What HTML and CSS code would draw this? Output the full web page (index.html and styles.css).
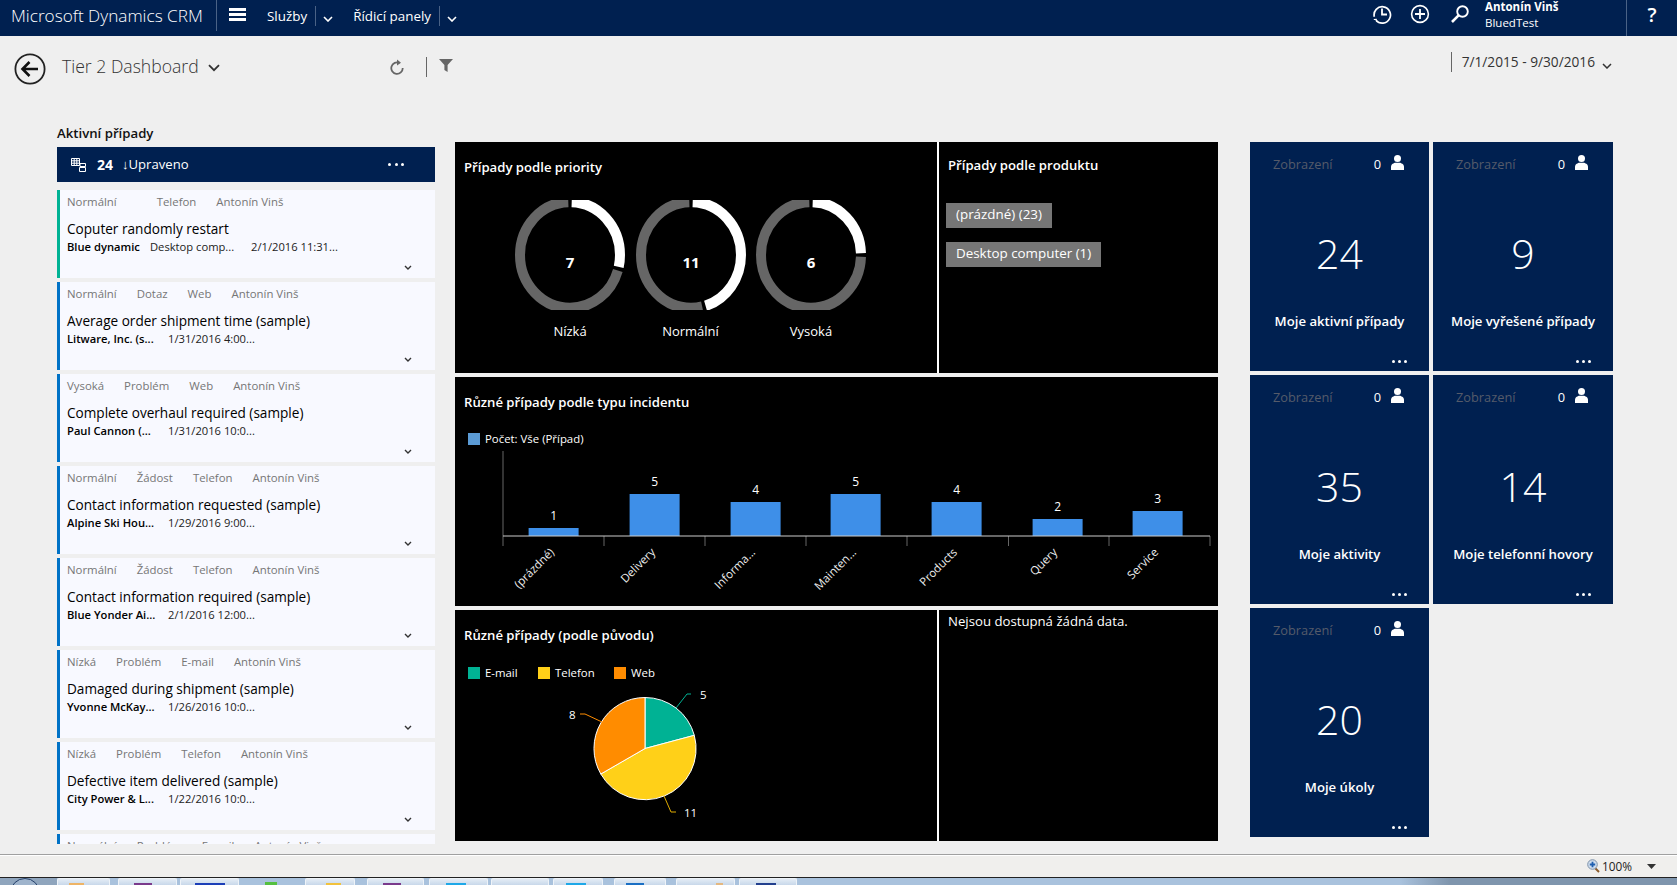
FILE: index.html
```html
<!DOCTYPE html>
<html lang="cs">
<head>
<meta charset="utf-8">
<title>Tier 2 Dashboard</title>
<link rel="stylesheet" href="styles.css">
</head>
<body>
<header class="topbar">
  <div class="brand">Microsoft Dynamics CRM</div>
  <svg class="burger" width="17" height="13" viewBox="0 0 17 13"><path d="M0 1.5h17M0 6.5h17M0 11.5h17" stroke="#fff" stroke-width="3"/></svg>
  <div class="nav nav-first">Služby</div>
  <svg class="nav-chev" width="10" height="6" viewBox="0 0 10 6"><path d="M1 1l4 4 4-4" fill="none" stroke="#fff" stroke-width="1.6"/></svg>
  <div class="nav nav-second">Řídicí panely</div>
  <svg class="nav-chev" width="10" height="6" viewBox="0 0 10 6"><path d="M1 1l4 4 4-4" fill="none" stroke="#fff" stroke-width="1.6"/></svg>
  <svg class="tool tool-clock" width="20" height="20" viewBox="0 0 20 20"><path d="M4 16.2A8.2 8.2 0 1 0 2.3 12.8" fill="none" stroke="#fff" stroke-width="1.7"/><path d="M1.8 15.5l2.4-.2.5 2.4" fill="none" stroke="#fff" stroke-width="1.2"/><path d="M10 4.5V10.500H15" fill="none" stroke="#fff" stroke-width="1.8"/></svg>
  <svg class="tool tool-plus" width="20" height="20" viewBox="0 0 20 20"><circle cx="10" cy="10" r="8.4" fill="none" stroke="#fff" stroke-width="1.6"/><path d="M10 5v10M5 10h10" stroke="#fff" stroke-width="1.8"/></svg>
  <svg class="tool tool-search" width="20" height="20" viewBox="0 0 20 20"><circle cx="12.5" cy="7.5" r="5.3" fill="none" stroke="#fff" stroke-width="1.9"/><path d="M8.6 11.4L2 18" stroke="#fff" stroke-width="2.6"/></svg>
  <div class="user"><b>Antonín Vinš</b><span>BluedTest</span></div>
  <div class="help">?</div>
</header>

<section class="toolbar">
  <svg class="back" width="32" height="32" viewBox="0 0 32 32"><circle cx="16" cy="16" r="14.6" fill="none" stroke="#222" stroke-width="1.8"/><path d="M15.5 9L8.5 16l7 7M9 16h15" fill="none" stroke="#111" stroke-width="2.6"/></svg>
  <h1 class="dash-title">Tier 2 Dashboard</h1>
  <svg class="dash-chev" width="12" height="8" viewBox="0 0 12 8"><path d="M1 1.2l5 5 5-5" fill="none" stroke="#333" stroke-width="1.8"/></svg>
  <svg class="refresh" width="14" height="16" viewBox="0 0 14 16"><path d="M9.5 4A5.7 5.7 0 1 0 12.7 9" fill="none" stroke="#666" stroke-width="1.8"/><path d="M7 0.5l4 3.2L7 6.5z" fill="#666"/></svg>
  <div class="vsep"></div>
  <svg class="funnel" width="14" height="13" viewBox="0 0 14 13"><path d="M0 0h14L8.6 6v7L5.4 11V6z" fill="#666"/></svg>
  <div class="date-range">7/1/2015 - 9/30/2016</div>
  <svg class="date-chev" width="10" height="6" viewBox="0 0 10 6"><path d="M1 1l4 4 4-4" fill="none" stroke="#333" stroke-width="1.5"/></svg>
</section>

<main class="content">
  <section class="cases">
    <h2 class="cases-title">Aktivní případy</h2>
    <div class="cases-bar">
      <svg class="grid-icon" width="15" height="14" viewBox="0 0 15 14"><path d="M.5.5h8v7h-8zM3.2.5v7M5.8.5v7M.5 2.8h8M.5 5.2h8M9 5.5h5.5v3H9zM8.5 9.5h6v4h-6z" fill="none" stroke="#fff" stroke-width="1"/></svg>
      <strong class="count">24</strong>
      <span class="sort">↓Upraveno</span>
      <span class="dots bar-dots"><i></i><i></i><i></i></span>
    </div>
    <div class="card-list">
      <article class="card card-green">
        <div class="meta"><span>Normální</span><span></span><span>Telefon</span><span>Antonín Vinš</span></div>
        <div class="card-title">Coputer randomly restart</div>
        <div class="sub sub-wide"><b>Blue dynamic</b><span>Desktop comp...</span><span>2/1/2016 11:31...</span></div>
        <svg class="card-chev" width="8" height="5" viewBox="0 0 8 5"><path d="M1 1l3 3 3-3" fill="none" stroke="#333" stroke-width="1.4"/></svg>
      </article>
      <article class="card">
        <div class="meta"><span>Normální</span><span>Dotaz</span><span>Web</span><span>Antonín Vinš</span></div>
        <div class="card-title">Average order shipment time (sample)</div>
        <div class="sub"><b>Litware, Inc. (s...</b><span>1/31/2016 4:00...</span></div>
        <svg class="card-chev" width="8" height="5" viewBox="0 0 8 5"><path d="M1 1l3 3 3-3" fill="none" stroke="#333" stroke-width="1.4"/></svg>
      </article>
      <article class="card">
        <div class="meta"><span>Vysoká</span><span>Problém</span><span>Web</span><span>Antonín Vinš</span></div>
        <div class="card-title">Complete overhaul required (sample)</div>
        <div class="sub"><b>Paul Cannon (...</b><span>1/31/2016 10:0...</span></div>
        <svg class="card-chev" width="8" height="5" viewBox="0 0 8 5"><path d="M1 1l3 3 3-3" fill="none" stroke="#333" stroke-width="1.4"/></svg>
      </article>
      <article class="card">
        <div class="meta"><span>Normální</span><span>Žádost</span><span>Telefon</span><span>Antonín Vinš</span></div>
        <div class="card-title">Contact information requested (sample)</div>
        <div class="sub"><b>Alpine Ski Hou...</b><span>1/29/2016 9:00...</span></div>
        <svg class="card-chev" width="8" height="5" viewBox="0 0 8 5"><path d="M1 1l3 3 3-3" fill="none" stroke="#333" stroke-width="1.4"/></svg>
      </article>
      <article class="card">
        <div class="meta"><span>Normální</span><span>Žádost</span><span>Telefon</span><span>Antonín Vinš</span></div>
        <div class="card-title">Contact information required (sample)</div>
        <div class="sub"><b>Blue Yonder Ai...</b><span>2/1/2016 12:00...</span></div>
        <svg class="card-chev" width="8" height="5" viewBox="0 0 8 5"><path d="M1 1l3 3 3-3" fill="none" stroke="#333" stroke-width="1.4"/></svg>
      </article>
      <article class="card">
        <div class="meta"><span>Nízká</span><span>Problém</span><span>E-mail</span><span>Antonín Vinš</span></div>
        <div class="card-title">Damaged during shipment (sample)</div>
        <div class="sub"><b>Yvonne McKay...</b><span>1/26/2016 10:0...</span></div>
        <svg class="card-chev" width="8" height="5" viewBox="0 0 8 5"><path d="M1 1l3 3 3-3" fill="none" stroke="#333" stroke-width="1.4"/></svg>
      </article>
      <article class="card">
        <div class="meta"><span>Nízká</span><span>Problém</span><span>Telefon</span><span>Antonín Vinš</span></div>
        <div class="card-title">Defective item delivered (sample)</div>
        <div class="sub"><b>City Power &amp; L...</b><span>1/22/2016 10:0...</span></div>
        <svg class="card-chev" width="8" height="5" viewBox="0 0 8 5"><path d="M1 1l3 3 3-3" fill="none" stroke="#333" stroke-width="1.4"/></svg>
      </article>
      <article class="card">
        <div class="meta"><span>Normální</span><span>Problém</span><span>E-mail</span><span>Antonín Vinš</span></div>
      </article>
    </div>
  </section>

  <section class="charts">
    <div class="split split-top">
      <div class="panel">
        <h3 class="panel-title">Případy podle priority</h3>
        <div class="donuts">
          <figure class="donut">
            <svg width="110" height="110" viewBox="0 0 110 110"><g transform="translate(55 55) scale(1 1.06) rotate(-90) translate(-55 -55)"><circle class="ring-grey" cx="55" cy="55" r="50" pathLength="360" stroke-dasharray="251 360" stroke-dashoffset="-107"/><circle class="ring-white" cx="55" cy="55" r="50" pathLength="360" stroke-dasharray="101 360" stroke-dashoffset="-2"/></g><text class="ring-num" x="55" y="68">7</text></svg>
            <figcaption>Nízká</figcaption>
          </figure>
          <figure class="donut">
            <svg width="110" height="110" viewBox="0 0 110 110"><g transform="translate(55 55) scale(1 1.06) rotate(-90) translate(-55 -55)"><circle class="ring-grey" cx="55" cy="55" r="50" pathLength="360" stroke-dasharray="191 360" stroke-dashoffset="-167"/><circle class="ring-white" cx="55" cy="55" r="50" pathLength="360" stroke-dasharray="161 360" stroke-dashoffset="-2"/></g><text class="ring-num" x="55" y="68">11</text></svg>
            <figcaption>Normální</figcaption>
          </figure>
          <figure class="donut">
            <svg width="110" height="110" viewBox="0 0 110 110"><g transform="translate(55 55) scale(1 1.06) rotate(-90) translate(-55 -55)"><circle class="ring-grey" cx="55" cy="55" r="50" pathLength="360" stroke-dasharray="266 360" stroke-dashoffset="-92"/><circle class="ring-white" cx="55" cy="55" r="50" pathLength="360" stroke-dasharray="86 360" stroke-dashoffset="-2"/></g><text class="ring-num" x="55" y="68">6</text></svg>
            <figcaption>Vysoká</figcaption>
          </figure>
        </div>
      </div>
      <div class="panel panel-side">
        <h3 class="panel-title">Případy podle produktu</h3>
        <div class="tags">
          <div class="tag">(prázdné) (23)</div>
          <div class="tag">Desktop computer (1)</div>
        </div>
      </div>
    </div>

    <div class="panel panel-wide">
      <h3 class="panel-title">Různé případy podle typu incidentu</h3>
      <div class="legend legend-bar"><span class="swatch sw-blue"></span><span>Počet: Vše (Případ)</span></div>
      <svg class="bar-chart" width="763" height="161" viewBox="0 0 763 161">
        <g class="bars">
          <rect x="73.6" y="83" width="50" height="8"/><rect x="174.6" y="49" width="50" height="42"/><rect x="275.6" y="57" width="50" height="34"/><rect x="375.6" y="49" width="50" height="42"/><rect x="476.6" y="57" width="50" height="34"/><rect x="577.6" y="74" width="50" height="17"/><rect x="677.6" y="66" width="50" height="25"/>
        </g>
        <path class="axis-y" d="M48 6V101M149 91v10M250 91v10M351 91v10M452 91v10M553.5 91v10M654 91v10M755 91v10"/>
        <path class="axis-x" d="M48 91H755"/>
        <g class="vals">
          <text x="98.6" y="75">1</text><text x="199.6" y="41">5</text><text x="300.6" y="49">4</text><text x="400.6" y="41">5</text><text x="501.6" y="49">4</text><text x="602.6" y="66">2</text><text x="702.6" y="58">3</text>
        </g>
        <g class="cats">
          <text transform="translate(100 108) rotate(-45)">(prázdné)</text>
          <text transform="translate(201 108) rotate(-45)">Delivery</text>
          <text transform="translate(301 108) rotate(-45)">Informa...</text>
          <text transform="translate(402 108) rotate(-45)">Mainten...</text>
          <text transform="translate(503 108) rotate(-45)">Products</text>
          <text transform="translate(603 108) rotate(-45)">Query</text>
          <text transform="translate(704 108) rotate(-45)">Service</text>
        </g>
      </svg>
    </div>

    <div class="split">
      <div class="panel">
        <h3 class="panel-title">Různé případy (podle původu)</h3>
        <div class="legend legend-pie">
          <span class="swatch sw-teal"></span><span class="leg-mail">E-mail</span>
          <span class="swatch sw-yellow"></span><span class="leg-phone">Telefon</span>
          <span class="swatch sw-orange"></span><span>Web</span>
        </div>
        <svg class="pie-chart" width="482" height="162" viewBox="0 0 482 162">
          <path d="M190 69.5V18.5A51 51 0 0 1 239.3 56.3Z" fill="#00b294" stroke="#fff"/>
          <path d="M190 69.5L239.3 56.3A51 51 0 0 1 145.8 95Z" fill="#ffd018" stroke="#fff"/>
          <path d="M190 69.5L145.8 95A51 51 0 0 1 190 18.5Z" fill="#ff8c00" stroke="#fff"/>
          <path d="M221 29L232 15h4" fill="none" stroke="#00b294"/>
          <path d="M147 43L130 35h-5" fill="none" stroke="#ff8c00"/>
          <path d="M209 117l7 16h5" fill="none" stroke="#e0ac00"/>
          <text class="pie-num" x="245" y="20">5</text>
          <text class="pie-num" x="114" y="40">8</text>
          <text class="pie-num" x="229" y="138">11</text>
        </svg>
      </div>
      <div class="panel panel-side panel-empty">Nejsou dostupná žádná data.</div>
    </div>
  </section>

  <section class="tiles">
    <article class="tile">
      <div class="tile-head"><span class="tile-view">Zobrazení</span><span class="tile-zero">0</span><svg class="person" width="13" height="15" viewBox="0 0 13 15"><circle cx="6.5" cy="3.5" r="3.5" fill="#fff"/><path d="M0 15v-3c0-3 3-4 4.500-4.200h4C10 8 13 9 13 12v3z" fill="#fff"/></svg></div>
      <div class="tile-num">24</div>
      <div class="tile-label">Moje aktivní případy</div>
      <span class="dots tile-dots"><i></i><i></i><i></i></span>
    </article>
    <article class="tile">
      <div class="tile-head"><span class="tile-view">Zobrazení</span><span class="tile-zero">0</span><svg class="person" width="13" height="15" viewBox="0 0 13 15"><circle cx="6.5" cy="3.5" r="3.5" fill="#fff"/><path d="M0 15v-3c0-3 3-4 4.500-4.200h4C10 8 13 9 13 12v3z" fill="#fff"/></svg></div>
      <div class="tile-num">9</div>
      <div class="tile-label">Moje vyřešené případy</div>
      <span class="dots tile-dots"><i></i><i></i><i></i></span>
    </article>
    <article class="tile">
      <div class="tile-head"><span class="tile-view">Zobrazení</span><span class="tile-zero">0</span><svg class="person" width="13" height="15" viewBox="0 0 13 15"><circle cx="6.5" cy="3.5" r="3.5" fill="#fff"/><path d="M0 15v-3c0-3 3-4 4.500-4.200h4C10 8 13 9 13 12v3z" fill="#fff"/></svg></div>
      <div class="tile-num">35</div>
      <div class="tile-label">Moje aktivity</div>
      <span class="dots tile-dots"><i></i><i></i><i></i></span>
    </article>
    <article class="tile">
      <div class="tile-head"><span class="tile-view">Zobrazení</span><span class="tile-zero">0</span><svg class="person" width="13" height="15" viewBox="0 0 13 15"><circle cx="6.5" cy="3.5" r="3.5" fill="#fff"/><path d="M0 15v-3c0-3 3-4 4.500-4.200h4C10 8 13 9 13 12v3z" fill="#fff"/></svg></div>
      <div class="tile-num">14</div>
      <div class="tile-label">Moje telefonní hovory</div>
      <span class="dots tile-dots"><i></i><i></i><i></i></span>
    </article>
    <article class="tile">
      <div class="tile-head"><span class="tile-view">Zobrazení</span><span class="tile-zero">0</span><svg class="person" width="13" height="15" viewBox="0 0 13 15"><circle cx="6.5" cy="3.5" r="3.5" fill="#fff"/><path d="M0 15v-3c0-3 3-4 4.500-4.200h4C10 8 13 9 13 12v3z" fill="#fff"/></svg></div>
      <div class="tile-num">20</div>
      <div class="tile-label">Moje úkoly</div>
      <span class="dots tile-dots"><i></i><i></i><i></i></span>
    </article>
  </section>
</main>

<footer class="statusbar">
  <svg class="zoom-icon" width="13" height="14" viewBox="0 0 13 14"><path d="M8 9l4 4" stroke="#8a5a2a" stroke-width="2"/><circle cx="5.500" cy="5.500" r="4.800" fill="#cfdcec" stroke="#7f93aa"/><path d="M5.500 2.800v5.400M2.800 5.500h5.400" stroke="#1f5fb0" stroke-width="1.800"/></svg>
  <span class="zoom-val">100%</span>
  <svg class="zoom-arrow" width="9" height="5" viewBox="0 0 9 5"><path d="M0 0h9L4.500 5z" fill="#333"/></svg>
</footer>
<div class="taskbar">
  <div class="orb"><i></i></div>
  <div class="tb tb1"><i class="ic-orange"></i></div>
  <div class="tb tb2"><i class="ic-purple"></i></div>
  <div class="tb tb3"><i class="ic-blue"></i></div>
  <div class="tb-plain"><i class="ic-green"></i></div>
  <div class="tb tb4"><i class="ic-yellow"></i></div>
  <div class="tb tb5"><i class="ic-purple"></i></div>
  <div class="tb tb6"><i class="ic-cyan"></i></div>
  <div class="tb tb7"></div>
  <div class="tb tb8"><i class="ic-cyan"></i></div>
  <div class="tb tb9"><i class="ic-blue2"></i></div>
  <div class="tb tb10"><i class="ic-tan"></i></div>
  <div class="tb tb11"><i class="ic-navy"></i></div>
</div>
</body>
</html>
```
FILE: styles.css
```css
* { box-sizing: border-box; }
html, body { margin: 0; height: 885px; overflow: hidden; }
body {
  display: flex;
  flex-direction: column;
  background: #efefef;
  font-family: "Open Sans", "Noto Sans", "Liberation Sans", sans-serif;
  font-size: 13px;
  color: #000;
}
h1, h2, h3, figure { margin: 0; font-weight: normal; }

/* top bar */
.topbar {
  flex: none;
  height: 36px;
  background: #002050;
  color: #fff;
  display: flex;
  align-items: center;
}
.brand {
  width: 217px;
  height: 31px;
  padding-left: 11px;
  line-height: 31px;
  margin-bottom: 5px;
  font-size: 17.200px;
  font-weight: 300;
  border-right: 1px solid #4a6286;
  white-space: nowrap;
}
.burger { margin: 0 0 7px 12px; }
.nav {
  font-size: 13.400px;
  height: 20px;
  line-height: 20px;
  padding-right: 8px;
  border-right: 1px solid #4a6286;
  margin-bottom: 4px;
}
.nav-first { margin-left: 21px; }
.nav-second { margin-left: 20px; }
.nav-chev { margin: 2px 0 0 7px; }
.tool { flex: none; margin-bottom: 8px; }
.tool-clock { margin-left: auto; }
.tool-plus { margin-left: 18px; }
.tool-search { margin-left: 20px; }
.user {
  width: 141px;
  margin-left: 15px;
  display: flex;
  flex-direction: column;
  font-size: 11.500px;
  line-height: 16px;
  margin-bottom: 6px;
}
.user b { font-weight: 700; }
.help {
  width: 51px;
  height: 36px;
  border-left: 1px solid #4a6286;
  text-align: center;
  font-size: 20px;
  font-weight: 600;
  line-height: 30px;
}

/* toolbar */
.toolbar {
  flex: none;
  height: 88px;
  padding: 17px 65px 0 14px;
  display: flex;
  align-items: flex-start;
}
.back { flex: none; }
.dash-title {
  margin: 1px 0 0 16px;
  font-size: 17.600px;
  font-weight: 300;
  line-height: 24px;
  color: #333;
  white-space: nowrap;
}
.dash-chev { margin: 11px 0 0 9px; }
.refresh { margin: 6px 0 0 170px; }
.vsep { width: 1px; height: 20px; background: #666; margin: 4px 0 0 22px; }
.funnel { margin: 6px 0 0 12px; }
.date-range {
  margin-left: auto;
  padding-left: 10px;
  border-left: 1px solid #666;
  height: 20px;
  line-height: 20px;
  font-size: 13.700px;
  color: #333;
  margin-top: -1px;
}
.date-chev { margin: 10px 0 0 7px; }

/* content */
.content {
  flex: 1;
  min-height: 0;
  padding-left: 57px;
  display: flex;
  align-items: flex-start;
}
.cases { width: 378px; flex: none; }
.cases-title {
  height: 23px;
  font-size: 13.200px;
  line-height: 19px;
  font-weight: 600;
  color: #111;
}
.cases-bar {
  height: 35px;
  background: #002050;
  color: #fff;
  display: flex;
  align-items: center;
  padding-left: 14px;
}
.count { margin-left: 11px; font-size: 14px; font-weight: 700; }
.sort { margin-left: 9px; font-size: 13.100px; padding-bottom: 2px; }
.dots { display: flex; gap: 3px; }
.dots i { width: 3px; height: 3px; border-radius: 50%; background: #fff; }
.bar-dots { margin-left: auto; margin-right: 31px; gap: 3.500px; }
.card-list {
  margin-top: 8px;
  height: 654px;
  overflow: hidden;
  display: flex;
  flex-direction: column;
  gap: 4px;
}
.card {
  flex: none;
  height: 88px;
  background: #f8f9ff;
  border-left: 3px solid #0072c6;
  padding: 4px 23px 0 7px;
  display: flex;
  flex-direction: column;
}
.card-green { border-left-color: #00b294; }
.meta {
  display: flex;
  gap: 20px;
  height: 16px;
  line-height: 16px;
  font-size: 11.400px;
  color: #767676;
  white-space: nowrap;
}
.card-title {
  margin-top: 10px;
  height: 18px;
  line-height: 18px;
  font-size: 13.600px;
  color: #000;
  white-space: nowrap;
}
.sub {
  margin-top: 1px;
  height: 16px;
  line-height: 16px;
  font-size: 11.200px;
  color: #222;
  display: grid;
  grid-template-columns: 101px auto;
  justify-content: start;
  white-space: nowrap;
}
.sub b { font-weight: 600; color: #000; }
.sub-wide { grid-template-columns: 83px 101px auto; }
.card-chev { align-self: flex-end; margin-top: 10px; }

/* charts */
.charts {
  width: 763px;
  flex: none;
  margin: 18px 0 0 20px;
  display: flex;
  flex-direction: column;
  gap: 4px;
}
.split {
  display: grid;
  grid-template-columns: 482px 279px;
  gap: 2px;
  height: 231px;
  background: #fff;
}
.panel { background: #000; color: #fff; padding: 16px 0 0 9px; }
.panel-title { font-size: 13.150px; line-height: 18px; font-weight: 600; white-space: nowrap; }
.panel-side { padding: 14px 0 0 9px; }
.panel-empty { padding-top: 2px; line-height: 18px; font-size: 13.200px; }
.panel-wide { height: 229px; }
.donuts { margin: 24px 0 0 51px; display: flex; gap: 10.500px; }
.donut { width: 110px; text-align: center; }
.donut svg { display: block; }
.donut figcaption { margin-top: 12px; line-height: 18px; font-size: 13px; }
.ring-grey, .ring-white { fill: none; stroke-width: 10; }
.ring-grey { stroke: #666; }
.ring-white { stroke: #fff; }
.ring-num { fill: #fff; font-size: 15px; font-weight: 700; text-anchor: middle; }
.tags { margin: 29px 0 0 -2px; display: flex; flex-direction: column; align-items: flex-start; gap: 14px; }
.tag {
  height: 25px;
  line-height: 23px;
  padding: 0 10px;
  background: #767676;
  font-size: 13.400px;
}
.legend { display: flex; align-items: center; height: 12px; font-size: 11.400px; margin-left: 4px; }
.legend span:not(.swatch) { padding-bottom: 2px; }
.swatch { width: 12px; height: 12px; margin-right: 5px; flex: none; }
.sw-blue { background: #5b9bd5; }
.sw-teal { background: #00b294; }
.sw-yellow { background: #ffd018; }
.sw-orange { background: #ff8c00; }
.legend-bar { margin-top: 22px; }
.legend-pie { margin-top: 23px; }
.leg-mail { width: 53px; }
.leg-phone { width: 59px; }
.bar-chart, .pie-chart { display: block; margin-left: -9px; }
.bars rect { fill: #3e8fe8; }
.axis-y { stroke: #666; fill: none; stroke-width: 1; }
.axis-x { stroke: #ccc; fill: none; stroke-width: 1; }
.vals text { fill: #fff; font-size: 12px; text-anchor: middle; }
.cats text { fill: #eee; font-size: 11.500px; text-anchor: end; }
.pie-num { fill: #fff; font-size: 11.500px; }

/* tiles */
.tiles {
  margin: 18px 0 0 32px;
  display: grid;
  grid-template-columns: 179px 180px;
  grid-auto-rows: 229px;
  gap: 4px;
}
.tile {
  background: #002050;
  color: #fff;
  display: flex;
  flex-direction: column;
}
.tile-head {
  height: 30px;
  padding: 13px 25px 0 23px;
  display: flex;
  align-items: flex-start;
  line-height: 18px;
  font-size: 12.800px;
}
.tile-view { color: #555b6a; }
.tile-zero { margin-left: auto; }
.person { margin: 0 0 0 10px; }
.tile-num {
  margin-top: 56px;
  height: 50px;
  line-height: 50px;
  text-align: center;
  font-size: 41px;
  font-weight: 300;
}
.tile-label {
  margin-top: 34px;
  line-height: 18px;
  text-align: center;
  font-size: 13.150px;
  font-weight: 600;
}
.tile-dots { margin: auto 22px 8px auto; gap: 3px; }

/* browser chrome */
.statusbar {
  flex: none;
  height: 23px;
  background: #f0efed;
  border-top: 1px solid #a0a0a0;
  box-shadow: inset 0 1px 0 #fff;
  display: flex;
  align-items: center;
  justify-content: flex-end;
  padding-right: 21px;
}
.zoom-val { margin-left: 2px; font-size: 11.800px; color: #222; }
.zoom-arrow { margin-left: 15px; }
.taskbar {
  flex: none;
  height: 8px;
  border-top: 1px solid #222;
  background: linear-gradient(90deg, #a9c2dd 0, #a9c2dd 1400px, #7f95ad 1450px, #7f95ad 100%);
  display: flex;
  overflow: hidden;
}
.orb { width: 57px; background: #8fa5bd; padding-left: 10px; }
.orb i { display: block; width: 30px; height: 30px; border: 1px solid #25406a; border-radius: 50%; background: #9fb4cc; }
.tb {
  flex: none;
  background: linear-gradient(#e4ecf5, #c8d8ea);
  border: 1px solid #eef3f8;
  border-bottom: 0;
  border-radius: 2px 2px 0 0;
}
.tb i, .tb-plain i { display: block; height: 8px; margin-top: 4px; }
.tb1 { width: 53px; }
.tb1 i { margin-left: 11px; width: 15px; }
.tb2 { width: 59px; margin-left: 8px; }
.tb2 i { margin-left: 15px; width: 18px; }
.tb3 { width: 59px; margin-left: 3px; }
.tb3 i { margin-left: 14px; width: 30px; }
.tb-plain { width: 66px; }
.tb-plain i { margin: 4px 0 0 26px; width: 12px; }
.tb4 { width: 50px; }
.tb4 i { margin-left: 20px; width: 15px; }
.tb5 { width: 57px; margin-left: 12px; }
.tb5 i { margin-left: 15px; width: 18px; }
.tb6 { width: 59px; margin-left: 5px; }
.tb6 i { margin-left: 16px; width: 20px; }
.tb7 { width: 58px; margin-left: 3px; }
.tb8 { width: 50px; margin-left: 4px; }
.tb8 i { margin-left: 12px; width: 20px; }
.tb9 { width: 52px; margin-left: 11px; }
.tb9 i { margin-left: 11px; width: 18px; }
.tb10 { width: 59px; margin-left: 10px; }
.tb10 i { margin-left: 39px; width: 7px; }
.tb11 { width: 58px; margin-left: 4px; }
.tb11 i { margin-left: 16px; width: 20px; }
.ic-orange { background: #eeb466; }
.ic-purple { background: #7a3a8c; }
.ic-blue { background: #1c3fb8; }
.ic-green { background: #55c040; }
.ic-yellow { background: #f2c23c; }
.ic-cyan { background: #1ea8e8; }
.ic-blue2 { background: #1a6fc4; }
.ic-tan { background: #e4b880; }
.ic-navy { background: #23408e; }
```
